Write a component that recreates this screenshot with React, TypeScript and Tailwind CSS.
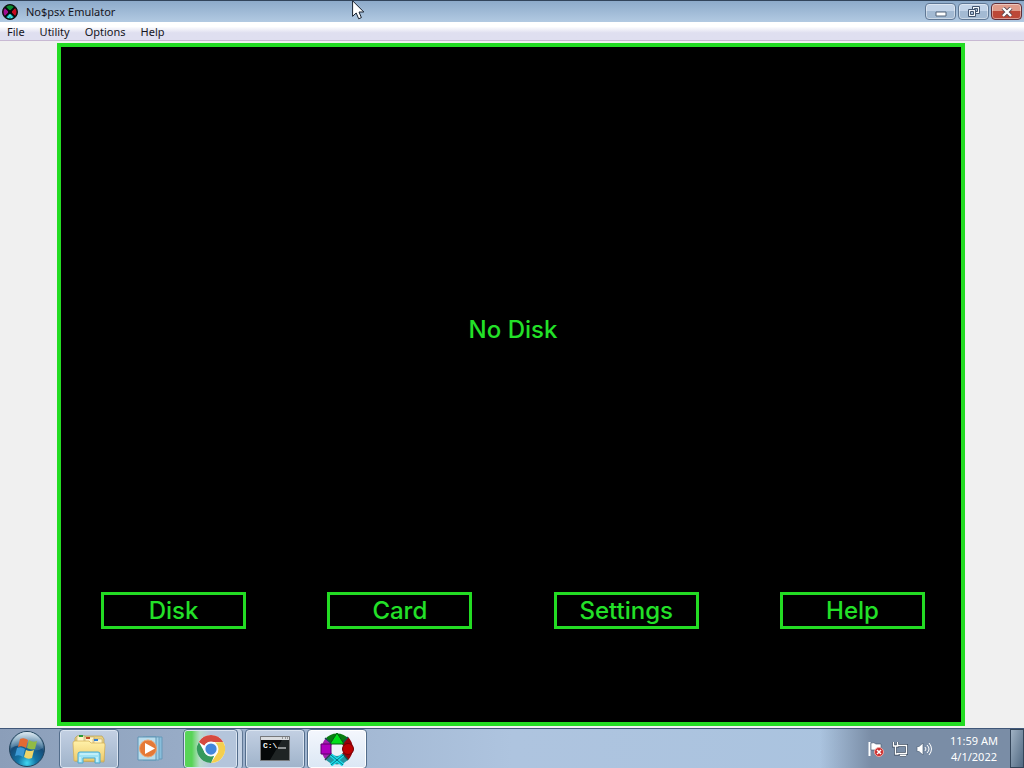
import type { ReactNode } from "react";

const menus = ["File", "Utility", "Options", "Help"];
const actions = ["Disk", "Card", "Settings", "Help"];

function Wheel({ className }: { className: string }) {
  return (
    <svg viewBox="0 0 34 34" className={className} aria-hidden="true">
      <circle cx="17" cy="17" r="11" fill="#edf2f8" />
      <path d="M5 7A16 16 0 0 1 29 7L22 12A8 8 0 0 0 12 12Z" fill="#087c10" />
      <path d="M28 5A16 16 0 0 1 28 28L22 22A8 8 0 0 0 22 12Z" fill="#980008" />
      <path d="M28 28A16 16 0 0 1 6 28L12 22A8 8 0 0 0 22 22Z" fill="#2396a2" />
      <path d="M6 28A16 16 0 0 1 6 6L12 12A8 8 0 0 0 12 22Z" fill="#a321ae" />
      <path d="m5 6 6 5m17-6-5 6M5 28l6-6m17 6-5-6" stroke="#155150" strokeWidth="1.5" />
      <path d="M17 1 24 12H10Z" fill="#00df19" stroke="#075e13" />
      <circle cx="28" cy="17" r="5.5" fill="#bd0000" stroke="#6e0008" />
      <path d="M1 12h10v10H1Z" fill="#ae00bd" stroke="#5c006a" />
      <path d="m11 23 12 10m0-10-12 10" stroke="#18dfec" strokeWidth="3.5" />
      <path d="m11 23 12 10m0-10-12 10" stroke="#086e82" strokeWidth="1" />
    </svg>
  );
}

function DarkWheel() {
  return (
    <svg viewBox="0 0 16 16" className="size-4" aria-hidden="true">
      <circle cx="8" cy="8" r="7.5" fill="#07130f" stroke="#111" />
      <path d="M8 7 4 3Q8-.5 12 3Z" fill="#098b2e" />
      <path d="m9 8 4-4q3 4 0 8Z" fill="#c70c20" />
      <path d="m8 9 4 4q-4 3-8 0Z" fill="#16b9bd" />
      <path d="M7 8 3 4q-3 4 0 8Z" fill="#a20c91" />
      <path d="m3 3 10 10m0-10L3 13" stroke="#080c0c" strokeWidth="1.5" />
      <circle cx="8" cy="8" r="2" fill="#080c0c" />
      <path d="m6 14 2-3 2 3" fill="none" stroke="#69eff0" />
    </svg>
  );
}

function Cursor() {
  return (
    <svg viewBox="0 0 14 20" className="pointer-events-none absolute top-0 left-[352px] z-10 h-5 w-3.5" aria-hidden="true">
      <path d="M.6.8v15.5l3.6-3.3 2.5 5.8 2.7-1.2L7 12h4.8Z" fill="#fff" stroke="#16202e" />
    </svg>
  );
}

function StartOrb() {
  return (
    <svg viewBox="0 0 38 38" className="size-[38px]" aria-hidden="true">
      <defs>
        <radialGradient id="orb" cx="50%" cy="90%" r="88%">
          <stop offset="0" stopColor="#41d7f1" />
          <stop offset=".3" stopColor="#1475a5" />
          <stop offset=".65" stopColor="#174c78" />
          <stop offset="1" stopColor="#9bb9cc" />
        </radialGradient>
        <linearGradient id="shine" x2="0" y2="1">
          <stop stopColor="#eef5fa" stopOpacity=".8" />
          <stop offset="1" stopColor="#8ebad2" stopOpacity=".2" />
        </linearGradient>
      </defs>
      <circle cx="19" cy="19" r="17.5" fill="url(#orb)" stroke="#23445d" />
      <path d="M3 18A16 16 0 0 1 35 18Q27 23 19 18T3 18Z" fill="url(#shine)" />
      <path d="M12 9q4-2 8 1l-2 8q-4-3-8-1Z" fill="#e36a32" />
      <path d="M21 10q4 3 8 1l-2 8q-4 1-8-1Z" fill="#91bb45" />
      <path d="M9 18q4-2 8 1l-2 8q-4-3-8-1Z" fill="#3d9ad5" />
      <path d="M18 20q4 2 8 0l-2 8q-4 2-8-1Z" fill="#efd568" />
    </svg>
  );
}

function FolderIcon() {
  return (
    <svg viewBox="0 0 36 32" className="h-8 w-9" aria-hidden="true">
      <defs>
        <linearGradient id="folder" x2="0" y2="1"><stop stopColor="#fff1a9" /><stop offset="1" stopColor="#eecb6c" /></linearGradient>
      </defs>
      <path d="M4 28V5l2-2h25l2 3v23Z" fill="#e9d383" stroke="#b99e53" strokeWidth=".7" />
      <path d="M6 3h8v7H6ZM13 4h10v7H13ZM22 6h9v6h-9Z" fill="#fff5c6" stroke="#bca46c" strokeWidth=".6" />
      <path d="M8 2h4v2H8Z" fill="#299c37" /><path d="M15 4h4v2h-4Z" fill="#c24925" /><path d="M23 6h4v2h-4Z" fill="#317ed5" />
      <path d="M2 10q0-2 2-2h14l2 2h13q1 0 1 2l-1 16H3Z" fill="url(#folder)" stroke="#d1ac52" strokeWidth=".7" />
      <path d="M7 30v-9q0-2 2-2h18q2 0 2 2v9h-5v-5H12v5Z" fill="#9ee2f4" stroke="#4ca9cf" />
      <path d="M9 21h18M9 24v5m17-5v5" stroke="#e3fbff" />
    </svg>
  );
}

function MediaIcon() {
  return (
    <svg viewBox="0 0 28 28" className="size-7" aria-hidden="true">
      <path d="M9 2h16v22H9Z" fill="#89bedb" stroke="#6799b9" />
      <path d="M6 2h16v23H6Z" fill="#a2cfe4" stroke="#6b9fbe" />
      <path d="M1 2h18v23H1Z" fill="#b9ddec" stroke="#6095b5" />
      <circle cx="11" cy="13.5" r="8.5" fill="#e57937" stroke="#eaa574" />
      <path d="m8 8 10 5.5L8 19Z" fill="#fff" />
    </svg>
  );
}

function ChromeIcon() {
  return (
    <svg viewBox="0 0 32 32" className="size-[30px]" aria-hidden="true">
      <circle cx="16" cy="16" r="15" fill="#fff" />
      <path d="M3 8.5A15 15 0 0 1 29 8.5H16A8 8 0 0 0 9 12.5Z" fill="#d64a3f" />
      <path d="M29 8.5A15 15 0 0 1 16 31l7-11q2-6-3-11Z" fill="#f4cf4f" />
      <path d="M16 31A15 15 0 0 1 3 8.5L9.5 20q4 5 10 3Z" fill="#359a5c" />
      <circle cx="16" cy="16" r="7" fill="#4386dc" stroke="#f7faff" strokeWidth="2" />
    </svg>
  );
}

function ConsoleIcon() {
  return (
    <svg viewBox="0 0 30 25" className="h-[25px] w-[30px]" aria-hidden="true">
      <path d="M.5.5h29v24H.5Z" fill="#050809" stroke="#77797c" />
      <path d="M1 1h28v3H1Z" fill="#d9dcdf" />
      <path d="M22 2h1m2 0h1m1 0h1" stroke="#555" />
      <path d="M22 4h7v20H10Z" fill="#2b3031" opacity=".7" />
      <text x="3" y="12" fontFamily="Liberation Mono, monospace" fontSize="8" fontWeight="bold" fill="#fff">C:\</text>
      <path d="M18 12h8" stroke="#fff" />
    </svg>
  );
}

const taskStyles = {
  plain: "w-[60px]",
  running: "w-[60px] border border-[#536d8b] bg-linear-to-b from-[#c3d0e3] to-[#9fb3ca] shadow-[inset_0_0_0_1px_#dbe5f1]",
  active: "w-[60px] border border-[#536d8b] bg-linear-to-b from-[#f4f7fd] to-[#dbe7f4] shadow-[inset_0_0_0_1px_#ffffff]",
  progress: "w-[55px] border border-[#536d8b] bg-linear-to-r from-[#58d457] from-15% via-[#b9dbcc] via-30% to-[#b4c5db] to-50% shadow-[inset_0_0_0_1px_#dbe5f1]",
};

function TaskButton({ label, children, look }: { label: string; children: ReactNode; look: keyof typeof taskStyles }) {
  return (
    <button aria-label={label} className={`flex h-10 items-center justify-center rounded-sm ${taskStyles[look]}`}>
      {children}
    </button>
  );
}

function WindowButton({ label, children, close = false }: { label: string; children: ReactNode; close?: boolean }) {
  return (
    <button aria-label={label} className={`flex h-[17px] w-[31px] items-center justify-center rounded-sm border shadow-[inset_0_0_0_1px_#ffffff70] ${close ? "border-[#602e38] bg-linear-to-b from-[#df9b8a] from-45% to-[#bc4838] to-50%" : "border-[#607895] bg-linear-to-b from-[#c2d3e8] from-45% to-[#a3bad3] to-50%"}`}>
      {children}
    </button>
  );
}

export default function App() {
  return (
    <div className="relative flex min-h-screen flex-col bg-[#f0f0f0] font-['Noto_Sans','Open_Sans',sans-serif] text-[11px] text-[#151522]">
      <Cursor />
      <header className="flex h-[22px] items-center border-t border-[#32445b] bg-linear-to-b from-[#8daaca] to-[#b2cae2] pl-0.5">
        <DarkWheel />
        <h1 className="ml-2 text-[11px] leading-4">No$psx Emulator</h1>
        <div className="ml-auto flex gap-0.5 pr-0.5">
          <WindowButton label="Minimize"><svg viewBox="0 0 12 6" className="mt-1 h-1.5 w-3"><path d="M1 1h10v4H1Z" fill="#fff" stroke="#53647b" /></svg></WindowButton>
          <WindowButton label="Restore"><svg viewBox="0 0 12 11" className="h-[11px] w-3"><path d="M4.5.5h7v7h-7Z" fill="#f3f7fb" stroke="#42556f" /><path d="M6.5 2.5h3v3h-3Z" fill="#a3bad3" stroke="#42556f" /><path d="M.5 3.5h7v7h-7Z" fill="#f3f7fb" stroke="#42556f" /><path d="M2.5 5.5h3v3h-3Z" fill="#a3bad3" stroke="#42556f" /></svg></WindowButton>
          <WindowButton label="Close" close><svg viewBox="0 0 12 10" className="h-2.5 w-3"><path d="m2 1 8 8m0-8L2 9" stroke="#594750" strokeWidth="4" /><path d="m2 1 8 8m0-8L2 9" stroke="#fff" strokeWidth="2.4" /></svg></WindowButton>
        </div>
      </header>
      <nav className="flex h-[19px] items-center gap-[15px] border-b border-[#c8b9d3] bg-linear-to-b from-white from-25% to-[#dfdff0] to-60% px-[7px] pt-px leading-4">
        {menus.map((menu) => <button key={menu}>{menu}</button>)}
      </nav>
      <main className="flex flex-1 pt-0.5 pr-[59px] pb-0.5 pl-[57px]">
        <section className="flex flex-1 flex-col border-4 border-[#23dc23] bg-black pr-9 pb-[93px] pl-10 font-['Inter','DejaVu_Sans',sans-serif] text-2xl font-medium text-[#23e028]">
          <div className="flex flex-1 items-center justify-center pt-5"><p>No Disk</p></div>
          <div className="flex justify-between">
            {actions.map((action) => <button key={action} className="h-[37px] w-[145px] border-3 border-[#23dc23] leading-7">{action}</button>)}
          </div>
        </section>
      </main>
      <footer className="flex h-10 items-center border-t border-[#405779] bg-linear-to-r from-[#8b9eb9] via-[#aec4df] via-50% to-[#a8c3df]">
        <button aria-label="Start" className="ml-2 mr-[13px]"><StartOrb /></button>
        <div className="flex gap-0.5">
          <TaskButton label="Windows Explorer" look="running"><FolderIcon /></TaskButton>
          <TaskButton label="Media Player" look="plain"><MediaIcon /></TaskButton>
          <div className="w-[60px] rounded-sm border-r border-[#607895] bg-[#c5d3e5]">
            <TaskButton label="Chrome" look="progress"><ChromeIcon /></TaskButton>
          </div>
          <TaskButton label="Command Prompt" look="running"><ConsoleIcon /></TaskButton>
          <TaskButton label="No$psx" look="active"><Wheel className="size-[34px]" /></TaskButton>
        </div>
        <div className="ml-auto flex h-full items-center bg-linear-to-r from-transparent to-[#7a8da6] to-25% pl-12 text-white">
          <div className="flex items-center gap-2">
            <button aria-label="Action Center"><svg viewBox="0 0 16 16" className="size-4"><path d="M1.5 1v14" stroke="#fff" strokeWidth="2" /><path d="M3 2q3-1 5 1h5v6H3Z" fill="#fff" stroke="#445469" strokeWidth=".6" /><circle cx="11" cy="11" r="4.5" fill="#cc2c2c" stroke="#f0aaa4" /><path d="m9 9 4 4m0-4-4 4" stroke="#fff" strokeWidth="1.5" /></svg></button>
            <button aria-label="Network"><svg viewBox="0 0 16 16" className="size-4" fill="none"><path d="M6 4.5h8.5v8H5M8 14.5h6M1.5 1v4h4V1M3.5 5v8h4" stroke="#39495d" strokeWidth="2.8" /><path d="M6 4.5h8.5v8H5M8 14.5h6M1.5 1v4h4V1M3.5 5v8h3" stroke="#fff" strokeWidth="1.4" /></svg></button>
            <button aria-label="Volume"><svg viewBox="0 0 16 16" className="size-4" fill="none"><path d="M1 5.5h2L7 2v12l-4-3.5H1Z" fill="#fff" stroke="#50647b" strokeWidth=".7" /><path d="M9 6q2 2 0 4m2-6q4 4 0 8m2-10q5 6 0 12" stroke="#fff" /></svg></button>
          </div>
          <div className="ml-[18px] mr-3 text-center leading-4"><div>11:59 AM</div><div>4/1/2022</div></div>
          <button aria-label="Show desktop" className="h-full w-3.5 border border-[#334559] bg-linear-to-br from-[#a0b2c4] to-[#526a82]" />
        </div>
      </footer>
    </div>
  );
}
